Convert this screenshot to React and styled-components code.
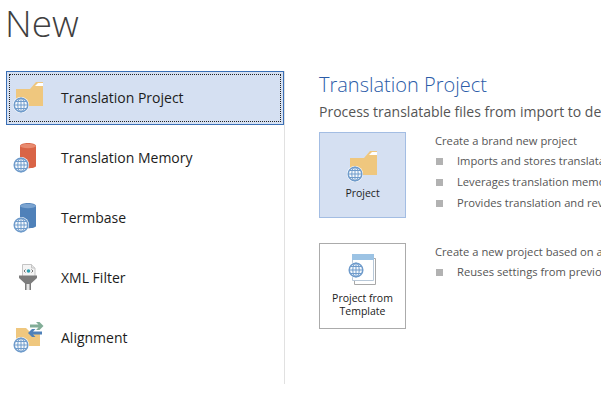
import React from "react";
import styled, { createGlobalStyle } from "styled-components";

const GlobalStyle = createGlobalStyle`
	html, body {
		margin: 0;
		padding: 0;
		background: #fff;
		overflow: hidden;
	}
	body {
		font-family: "Open Sans", "Liberation Sans", sans-serif;
	}
`;

const Globe = ({ x = 0, y = 0 }) => (
	<g transform={`translate(${x} ${y})`} fill="none">
		<circle cx="8" cy="8" r="8" fill="#fff" />
		<circle cx="8" cy="8" r="6.800" stroke="#6f9bcb" strokeWidth="1.500" fill="#f4f8fc" />
		<ellipse cx="8" cy="8" rx="3.200" ry="7" stroke="#6f9bcb" />
		<path d="M1 8h14M2 4.500h12M2 11.500h12M8 1v14" stroke="#6f9bcb" />
	</g>
);

const FolderIcon = () => (
	<svg width="32" height="32" viewBox="0 0 32 32">
		<path d="M3 8h14l6-7h7v24H3z" fill="#efc77e" />
		<path d="M22 5l3-3h5v3z" fill="#fff" />
		<Globe x="0" y="16" />
	</svg>
);

const CylinderIcon = ({ color, top }) => (
	<svg width="32" height="32" viewBox="0 0 32 32">
		<path d="M7 5c0-4 16-4 16 0v20c0 3-16 3-16 0z" fill={color} />
		<ellipse cx="15" cy="5" rx="8" ry="2.200" fill={top} />
		<Globe x="0" y="16" />
	</svg>
);

const FilterIcon = () => (
	<svg width="32" height="32" viewBox="0 0 32 32">
		<path d="M9.500 3.500h9l3.500 3.500v9H9.500z" fill="#f4f4f4" stroke="#c4c4c4" />
		<path d="M18.500 3.500V7H22" fill="#e4e4e4" stroke="#c4c4c4" />
		<circle cx="15.500" cy="10" r="1.800" fill="#2e9fb0" />
		<path d="M12.500 8.500l-1.500 1.500 1.500 1.500M18.500 8.500l1.500 1.500-1.500 1.500" fill="none" stroke="#777" />
		<path d="M6 14.500h18v2.500l-6 5.500V29h-6v-6.500L6 17z" fill="#7c7c7c" />
		<path d="M13.500 23h3v6h-3z" fill="#e6e6e6" />
	</svg>
);

const AlignmentIcon = () => (
	<svg width="32" height="32" viewBox="0 0 32 32">
		<path d="M3 7h10l4 4h10v14H3z" fill="#efc77e" />
		<path d="M17 3.500h8.500L23 1h3.500l4 4-4 4H23l2.500-2.500H17z" fill="#82ad97" />
		<path d="M29 10.500h-9l2.500-2.500H19l-4 4 4 4h3.500L20 13.500h9z" fill="#4f81b9" />
		<Globe x="0" y="16" />
	</svg>
);

const TemplateIcon = () => (
	<svg width="30" height="34" viewBox="0 0 30 34">
		<path d="M6.500 5.500h21v26h-21z" fill="#fff" stroke="#a8a8a8" />
		<path d="M4.500 1.500h21v26h-21z" fill="#fff" stroke="#b8c8d8" />
		<path d="M4 1h22v6H4z" fill="#9cc3e4" />
		<Globe x="0" y="9" />
	</svg>
);

const items = [
	{ label: "Translation Project", icon: <FolderIcon />, selected: true },
	{ label: "Translation Memory", icon: <CylinderIcon color="#d96446" top="#e88a6f" /> },
	{ label: "Termbase", icon: <CylinderIcon color="#4f81b9" top="#7aa3d0" /> },
	{ label: "XML Filter", icon: <FilterIcon /> },
	{ label: "Alignment", icon: <AlignmentIcon /> },
];

const sections = [
	{
		label: ["Project"],
		icon: <FolderIcon />,
		active: true,
		title: "Create a brand new project",
		bullets: [
			"Imports and stores translatable files in a single package",
			"Leverages translation memories and termbases",
			"Provides translation and review tracking",
		],
	},
	{
		label: ["Project from", "Template"],
		icon: <TemplateIcon />,
		title: "Create a new project based on an existing template",
		bullets: ["Reuses settings from previous projects"],
	},
];

export default function App() {
	return (
		<Page>
			<GlobalStyle />
			<Title>New</Title>
			<Columns>
				<Sidebar>
					{items.map((item) => (
						<NavItem key={item.label} $selected={item.selected}>
							<NavInner $selected={item.selected}>
								<NavIcon>{item.icon}</NavIcon>
								<NavLabel>{item.label}</NavLabel>
							</NavInner>
						</NavItem>
					))}
				</Sidebar>
				<Details>
					<Heading>Translation Project</Heading>
					<Summary>Process translatable files from import to delivery</Summary>
					<Sections>
						{sections.map((section) => (
							<Section key={section.title}>
								<Tile $active={section.active}>
									{section.icon}
									<TileLabel>
										{section.label.map((line) => (
											<span key={line}>{line}</span>
										))}
									</TileLabel>
								</Tile>
								<Info>
									<InfoTitle>{section.title}</InfoTitle>
									{section.bullets.map((bullet) => (
										<Bullet key={bullet}>{bullet}</Bullet>
									))}
								</Info>
							</Section>
						))}
					</Sections>
				</Details>
			</Columns>
		</Page>
	);
}

const Page = styled.div`
	width: 601px;
	height: 403px;
	overflow: hidden;
	background: #fff;
`;

const Title = styled.h1`
	margin: 0;
	padding-left: 5px;
	height: 71px;
	font-size: 37px;
	line-height: 46px;
	font-weight: 300;
	color: #3f3f3f;
`;

const Columns = styled.div`
	display: flex;
`;

const Sidebar = styled.div`
	flex: none;
	box-sizing: border-box;
	width: 285px;
	height: 313px;
	padding-left: 6px;
	border-right: 1px solid #e1e1e1;
`;

const NavItem = styled.div`
	box-sizing: border-box;
	height: 54px;
	margin-bottom: 6px;
	padding: 2px;
	border: 1px solid ${(p) => (p.$selected ? "#3a6fb5" : "transparent")};
	background: ${(p) => (p.$selected ? "#d5e0f2" : "transparent")};
`;

const NavInner = styled.div`
	display: flex;
	align-items: center;
	box-sizing: border-box;
	height: 100%;
	padding: 0 0 2px 3px;
	border: 1px dotted ${(p) => (p.$selected ? "#222" : "transparent")};
`;

const NavIcon = styled.div`
	display: flex;
	width: 48px;
`;

const NavLabel = styled.span`
	font-size: 14px;
	color: #1c1c1c;
`;

const Details = styled.div`
	flex: none;
	width: 400px;
	padding-left: 34px;
`;

const Heading = styled.h2`
	margin: 0;
	font-size: 20px;
	line-height: 28px;
	font-weight: 300;
	color: #2b5ca8;
`;

const Summary = styled.p`
	margin: 3px 0 0;
	font-size: 14px;
	line-height: 20px;
	white-space: nowrap;
	color: #555;
`;

const Sections = styled.div`
	display: flex;
	flex-direction: column;
	gap: 25px;
	margin-top: 10px;
`;

const Section = styled.div`
	display: flex;
	gap: 29px;
`;

const Tile = styled.div`
	flex: none;
	display: flex;
	flex-direction: column;
	align-items: center;
	gap: 5px;
	box-sizing: border-box;
	width: 87px;
	height: 86px;
	padding-top: ${(p) => (p.$active ? "17px" : "9px")};
	border: 1px solid ${(p) => (p.$active ? "#a3bde3" : "#ababab")};
	background: ${(p) => (p.$active ? "#d5e0f2" : "#fff")};
`;

const TileLabel = styled.div`
	display: flex;
	flex-direction: column;
	align-items: center;
	font-size: 10.500px;
	line-height: 13px;
	color: #222;
`;

const Info = styled.div`
	display: flex;
	flex-direction: column;
	gap: 3px;
	white-space: nowrap;
`;

const InfoTitle = styled.div`
	margin-bottom: -1px;
	font-size: 11.200px;
	line-height: 18px;
	color: #555;
`;

const Bullet = styled.div`
	display: flex;
	align-items: center;
	gap: 14px;
	font-size: 11.200px;
	line-height: 18px;
	color: #555;
	&::before {
		content: "";
		flex: none;
		width: 7px;
		height: 7px;
		margin-left: 1px;
		background: #b2b2b2;
	}
`;
